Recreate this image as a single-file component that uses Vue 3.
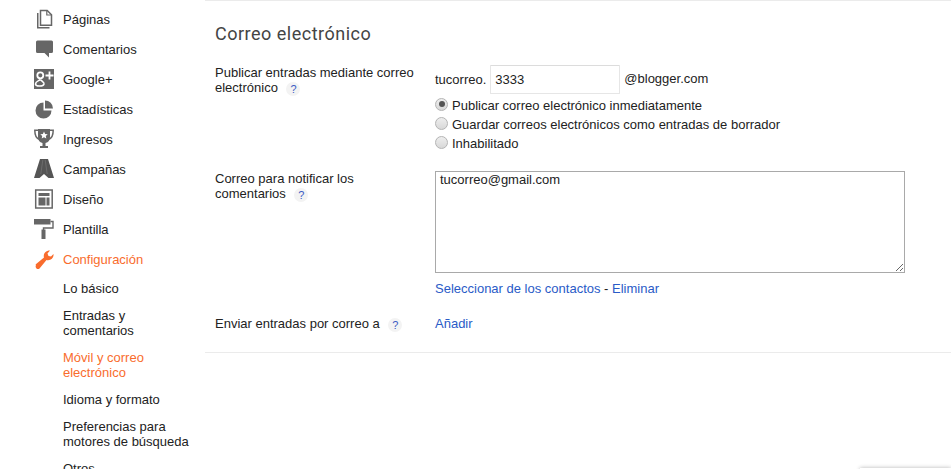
<script setup>
const navItems = [
  { label: 'Páginas', icon: 'pages' },
  { label: 'Comentarios', icon: 'comments' },
  { label: 'Google+', icon: 'gplus' },
  { label: 'Estadísticas', icon: 'stats' },
  { label: 'Ingresos', icon: 'trophy' },
  { label: 'Campañas', icon: 'ads' },
  { label: 'Diseño', icon: 'layout' },
  { label: 'Plantilla', icon: 'roller' },
  { label: 'Configuración', icon: 'wrench', active: true },
]
const subItems = [
  { label: 'Lo básico' },
  { label: 'Entradas y comentarios' },
  { label: 'Móvil y correo electrónico', active: true },
  { label: 'Idioma y formato' },
  { label: 'Preferencias para motores de búsqueda' },
  { label: 'Otros' },
]
</script>

<template>
  <div class="page">
    <aside class="sidebar">
      <ul class="nav">
        <li v-for="item in navItems" :key="item.label" class="nav-item" :class="{ active: item.active }">
          <span class="nav-icon">
            <svg v-if="item.icon === 'pages'" width="20" height="20" viewBox="0 0 20 20">
              <path d="M3 4v15.500h12.500V18H4.500V4z" fill="#666" />
              <path d="M6.500 1.500h6.700l4.300 4.300v10.400H6.500z" fill="#fff" stroke="#666" stroke-width="1.500" />
              <path d="M12.800 1.500v4.500h4.700" fill="none" stroke="#666" stroke-width="1.200" />
            </svg>
            <svg v-else-if="item.icon === 'comments'" width="20" height="20" viewBox="0 0 20 20">
              <path d="M3.500 1.500h14q1.500 0 1.500 1.500v9.500q0 1.500-1.500 1.500h-2.500v4.500L10.500 14h-7Q2 14 2 12.500V3q0-1.500 1.500-1.500z" fill="#666" />
            </svg>
            <svg v-else-if="item.icon === 'gplus'" width="20" height="20" viewBox="0 0 20 20">
              <rect width="20" height="20" fill="#666" />
              <circle cx="6.300" cy="6.300" r="3" fill="none" stroke="#fff" stroke-width="1.800" />
              <path d="M6.500 10.500c-2 1.500-5 2-5 4.500s7.500 3 8.500 0c.5-2-3-3-3.500-4.500" fill="none" stroke="#fff" stroke-width="1.600" />
              <path d="M15.500 2.500v8M11.500 6.500h8" stroke="#fff" stroke-width="1.800" />
            </svg>
            <svg v-else-if="item.icon === 'stats'" width="20" height="20" viewBox="0 0 20 20">
              <path d="M9.500 3.500A8 8 0 1 0 17.500 11.500H9.500z" fill="#666" />
              <path d="M11 1.500a8 8 0 0 1 8 8h-8z" fill="#666" />
            </svg>
            <svg v-else-if="item.icon === 'trophy'" width="20" height="20" viewBox="0 0 20 20">
              <path d="M4 0h12v8q0 5-4.500 6v3H14v2H6v-2h2.500v-3Q4 13 4 8z" fill="#666" />
              <path d="M4 1.200H.8c0 5 1 8 4.500 9M16 1.200h3.200c0 5-1 8-4.500 9" fill="none" stroke="#666" stroke-width="1.500" />
              <path d="M10 2.500l1.100 2.400 2.600.3-1.900 1.700.5 2.600L10 8.200l-2.300 1.300.5-2.600-1.900-1.700 2.600-.3z" fill="#fff" />
            </svg>
            <svg v-else-if="item.icon === 'ads'" width="20" height="20" viewBox="0 0 20 20">
              <path d="M6 0h8l6 19h-5.500L10 15l-4.500 4H0z" fill="#555" />
              <path d="M8.800 1l-2 14M11.200 1l2 14" stroke="#777" stroke-width=".7" fill="none" />
            </svg>
            <svg v-else-if="item.icon === 'layout'" width="20" height="20" viewBox="0 0 20 20">
              <rect x="1.700" y="1" width="16.500" height="18" fill="none" stroke="#666" stroke-width="1.500" />
              <rect x="4.500" y="4" width="11" height="3" fill="#666" />
              <rect x="4.500" y="8.500" width="7" height="8" fill="#666" />
              <rect x="12.500" y="8.500" width="3" height="8" fill="#666" />
            </svg>
            <svg v-else-if="item.icon === 'roller'" width="20" height="20" viewBox="0 0 20 20">
              <rect x="0" y="0" width="16.500" height="5.500" fill="#666" />
              <path d="M16.500 2.500h2.500v6.500H9.500v2" fill="none" stroke="#666" stroke-width="1.400" />
              <rect x="7.500" y="10.500" width="4" height="9.500" fill="#666" />
            </svg>
            <svg v-else width="20" height="20" viewBox="0 0 20 20">
              <path d="M1.500 15.500L10 8.500c-1-3 1-7 6-7l-2.500 3 1 2.500 2.500.5 2.500-2.500c.5 4-3 7-7 6l-7 8.500q-1.500 1.500-3 0t-.5-3.500z" fill="#f96c2d" />
            </svg>
          </span>
          <span>{{ item.label }}</span>
        </li>
      </ul>
      <ul class="subnav">
        <li v-for="sub in subItems" :key="sub.label" class="sub-item" :class="{ active: sub.active }">{{ sub.label }}</li>
      </ul>
    </aside>

    <main class="content">
      <h1 class="title">Correo electrónico</h1>

      <section class="row row-publish">
        <div class="label">
          Publicar entradas mediante correo electrónico
          <span class="help">?</span>
        </div>
        <div class="field">
          <div class="address">
            <span class="prefix">tucorreo.</span>
            <input class="secret" type="text" value="3333" />
            <span class="suffix">@blogger.com</span>
          </div>
          <label class="radio"><input type="radio" name="mode" checked /><span>Publicar correo electrónico inmediatamente</span></label>
          <label class="radio"><input type="radio" name="mode" /><span>Guardar correos electrónicos como entradas de borrador</span></label>
          <label class="radio"><input type="radio" name="mode" /><span>Inhabilitado</span></label>
        </div>
      </section>

      <section class="row row-notify">
        <div class="label label-notify">
          Correo para notificar los comentarios
          <span class="help">?</span>
        </div>
        <div class="field">
          <textarea class="emails">tucorreo@gmail.com</textarea>
          <div class="links"><a>Seleccionar de los contactos</a> - <a>Eliminar</a></div>
        </div>
      </section>

      <section class="row row-send">
        <div class="label">
          Enviar entradas por correo a
          <span class="help">?</span>
        </div>
        <div class="field"><a>Añadir</a></div>
      </section>
    </main>

    <div class="corner-shadow"></div>
  </div>
</template>

<style>
html, body { margin: 0; background: #fff; }
</style>

<style scoped>
.page {
  position: relative;
  display: flex;
  width: 951px;
  height: 469px;
  overflow: hidden;
  background: #fff;
  color: #222;
  font: 13px/15px "Liberation Sans", Arial, sans-serif;
}
ul { list-style: none; margin: 0; padding: 0; }
.sidebar { flex: none; width: 205px; padding-top: 4px; box-sizing: border-box; }
.nav-item {
  display: flex;
  align-items: center;
  height: 30px;
  padding-left: 34px;
  gap: 9px;
}
.nav-icon { display: block; width: 20px; height: 20px; flex: none; }
.nav-icon svg { display: block; }
.nav-item.active { color: #f96c2d; }
.subnav { padding: 7px 16px 0 63px; }
.sub-item { margin-bottom: 12px; }
.sub-item.active { color: #f96c2d; }
.content {
  flex: 1;
  height: 353px;
  box-sizing: border-box;
  border-top: 1px solid #ebebeb;
  border-bottom: 1px solid #ebebeb;
  padding: 0 10px;
}
.title {
  margin: 21px 0 0;
  font: 400 18px/24px Roboto, "Liberation Sans", sans-serif;
  letter-spacing: .5px;
  color: #444;
}
.row { display: flex; }
.label { flex: none; width: 220px; padding-right: 20px; box-sizing: border-box; }
.help {
  display: inline-block;
  width: 14px;
  height: 14px;
  margin-left: 5px;
  border-radius: 50%;
  background: #f3f3f3;
  color: #3b5bc4;
  font-size: 11px;
  line-height: 14px;
  text-align: center;
  vertical-align: -1px;
}
.field { flex: none; width: 470px; }
.row-publish { margin-top: 19px; }
.address { display: flex; align-items: center; gap: 4px; height: 29px; }
.prefix { margin-top: -1px; }
.suffix { margin-top: -3px; }
.secret {
  width: 130px;
  height: 29px;
  box-sizing: border-box;
  padding: 0 4px;
  border: 1px solid #e6e6e6;
  border-top-color: #dcdcdc;
  border-radius: 1px;
  outline: 0;
  color: #222;
  font: inherit;
}
.radio { display: flex; align-items: center; gap: 4px; height: 19px; }
.radio:first-of-type { margin-top: 2px; }
.radio input {
  appearance: none;
  flex: none;
  position: relative;
  width: 13px;
  height: 13px;
  margin: 0 0 3px;
  border: 1px solid #b4b4b4;
  border-radius: 50%;
  background: linear-gradient(#eee, #d8d8d8);
}
.radio input:checked::after {
  content: "";
  position: absolute;
  inset: 2.500px;
  border-radius: 50%;
  background: #555;
}
.row-notify { margin-top: 18px; }
.label-notify { padding-right: 60px; }
.emails {
  display: block;
  width: 470px;
  height: 102px;
  box-sizing: border-box;
  margin: 0;
  padding: 0 4px;
  border: 1px solid #a9a9a9;
  border-radius: 0;
  outline: 0;
  color: #222;
  font: inherit;
  resize: vertical;
}
.links { margin-top: 8px; }
a { color: #2a5bc7; cursor: pointer; }
.row-send { margin-top: 20px; }
.corner-shadow {
  position: absolute;
  right: 0;
  bottom: -4px;
  width: 91px;
  height: 5px;
  background: #fff;
  box-shadow: 0 0 4px rgba(0, 0, 0, .3);
}
</style>
